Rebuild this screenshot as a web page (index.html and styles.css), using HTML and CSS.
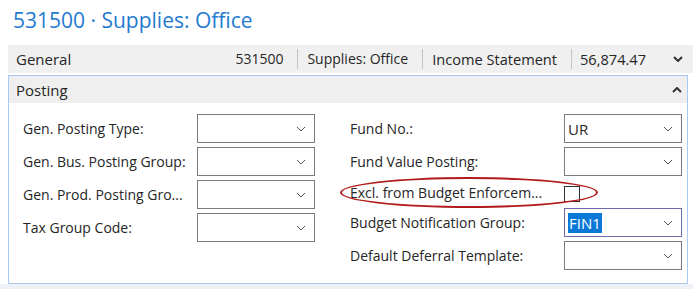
FILE: index.html
```html
<!DOCTYPE html>
<html lang="en">
<head>
    <meta charset="UTF-8">
    <title>531500 · Supplies: Office</title>
    <link rel="stylesheet" href="styles.css">
</head>
<body>

<div class="page-title">531500 · Supplies: Office</div>

<!-- General (collapsed) -->
<div class="fasttab-general">
    <div class="tab-name">General</div>
    <div class="summary">531500</div>
    <div class="summary sep">Supplies: Office</div>
    <div class="summary sep">Income Statement</div>
    <div class="summary sep amount">56,874.47</div>
    <svg class="tab-chevron" width="10" height="6" viewBox="0 0 10 6"><path d="M1 1 L5 5 L9 1" fill="none" stroke="#333" stroke-width="2"/></svg>
</div>

<!-- Posting (expanded) -->
<div class="fasttab-posting">
    <div class="posting-header">
        <div class="tab-name">Posting</div>
        <svg class="tab-chevron" width="10" height="6" viewBox="0 0 10 6"><path d="M1 5 L5 1 L9 5" fill="none" stroke="#333" stroke-width="2"/></svg>
    </div>
    <div class="posting-body">
        <div class="col col-left">
            <div class="field"><span class="label">Gen. Posting Type:</span><div class="select"><span class="value"></span><svg class="dd" width="10" height="6" viewBox="0 0 10 6"><path d="M1 1 L5 5 L9 1" fill="none" stroke="#555" stroke-width="1"/></svg></div></div>
            <div class="field"><span class="label">Gen. Bus. Posting Group:</span><div class="select"><span class="value"></span><svg class="dd" width="10" height="6" viewBox="0 0 10 6"><path d="M1 1 L5 5 L9 1" fill="none" stroke="#555" stroke-width="1"/></svg></div></div>
            <div class="field"><span class="label">Gen. Prod. Posting Gro...</span><div class="select"><span class="value"></span><svg class="dd" width="10" height="6" viewBox="0 0 10 6"><path d="M1 1 L5 5 L9 1" fill="none" stroke="#555" stroke-width="1"/></svg></div></div>
            <div class="field"><span class="label">Tax Group Code:</span><div class="select"><span class="value"></span><svg class="dd" width="10" height="6" viewBox="0 0 10 6"><path d="M1 1 L5 5 L9 1" fill="none" stroke="#555" stroke-width="1"/></svg></div></div>
        </div>
        <div class="col col-right">
            <div class="field"><span class="label">Fund No.:</span><div class="select"><span class="value">UR</span><svg class="dd" width="10" height="6" viewBox="0 0 10 6"><path d="M1 1 L5 5 L9 1" fill="none" stroke="#555" stroke-width="1"/></svg></div></div>
            <div class="field"><span class="label">Fund Value Posting:</span><div class="select"><span class="value"></span><svg class="dd" width="10" height="6" viewBox="0 0 10 6"><path d="M1 1 L5 5 L9 1" fill="none" stroke="#555" stroke-width="1"/></svg></div></div>
            <div class="field field-check">
                <span class="label">Excl. from Budget Enforcem...</span>
                <div class="checkbox"></div>
                <div class="highlight-ring"></div>
            </div>
            <div class="field"><span class="label">Budget Notification Group:</span><div class="select focused"><span class="value"><span class="selected-text">FIN1</span></span><svg class="dd" width="10" height="6" viewBox="0 0 10 6"><path d="M1 1 L5 5 L9 1" fill="none" stroke="#555" stroke-width="1"/></svg></div></div>
            <div class="field"><span class="label">Default Deferral Template:</span><div class="select"><span class="value"></span><svg class="dd" width="10" height="6" viewBox="0 0 10 6"><path d="M1 1 L5 5 L9 1" fill="none" stroke="#555" stroke-width="1"/></svg></div></div>
        </div>
    </div>
</div>
<div class="page-bottom"></div>

</body>
</html>
```

FILE: styles.css
```css
body {
    margin: 0;
    background: white;
    font-family: 'Open Sans', 'Noto Sans', sans-serif;
    color: #262626;
    width: 693px;
    height: 289px;
    overflow: hidden;
}

.page-title {
    padding: 6px 0 0 13px;
    height: 38px;
    box-sizing: border-box;
    font-size: 21px;
    color: #1f7bd0;
    line-height: 28px;
}

.fasttab-general {
    display: flex;
    align-items: center;
    margin-left: 8px;
    margin-top: 7px;
    height: 28px;
    background: #f0f0f0;
    padding-left: 8px;
    font-size: 14px;
}

.tab-name {
    flex: 1;
    font-size: 15px;
}

.summary {
    padding: 0 14px 0 9px;
    line-height: 20px;
}

.summary.sep {
    border-left: 1px solid #c4c4c4;
}

.summary.sep:nth-child(4) {
    font-size: 14.6px;
}

.summary.amount {
    padding: 0 0 0 8px;
    width: 93px;
    font-size: 14.6px;
}

.tab-chevron {
    margin: 0 10px 0 0;
}

.fasttab-posting {
    margin: 2px 5px 0 8px;
    border: 1px solid #a9c9f0;
    height: 209px;
    box-sizing: border-box;
}

.posting-header {
    display: flex;
    align-items: center;
    height: 27px;
    padding-left: 7px;
    background: #efefef;
}

.posting-header .tab-chevron {
    margin-right: 5px;
}

.posting-body {
    display: flex;
    padding: 11px 0 0 14px;
    font-size: 14px;
}

.col {
    display: flex;
    flex-direction: column;
    gap: 4px;
}

.col-left {
    width: 327px;
}

.field {
    display: flex;
    align-items: center;
    height: 29px;
    position: relative;
}

.label {
    width: 174px;
    white-space: nowrap;
}

.col-right .label {
    width: 214px;
}

.select {
    display: flex;
    align-items: center;
    width: 118px;
    height: 29px;
    box-sizing: border-box;
    border: 1px solid #7a7a7a;
    padding: 0 8px 0 3px;
}

.select .value {
    flex: 1;
    font-size: 15px;
}

.select.focused {
    border-color: #6d6aa8;
}

.selected-text {
    background: #0a78d7;
    color: white;
    padding: 0 1px;
}

.field-check {
    height: 24px;
}

.checkbox {
    width: 16px;
    height: 16px;
    margin-top: 4px;
    box-sizing: border-box;
    border: 1px solid #333;
}

.highlight-ring {
    position: absolute;
    left: -10px;
    top: -3px;
    width: 258px;
    height: 31px;
    border: 2px solid #b31b1b;
    border-radius: 50%;
    box-sizing: border-box;
}

.page-bottom {
    height: 5px;
    background: #eef1f5;
}
```
